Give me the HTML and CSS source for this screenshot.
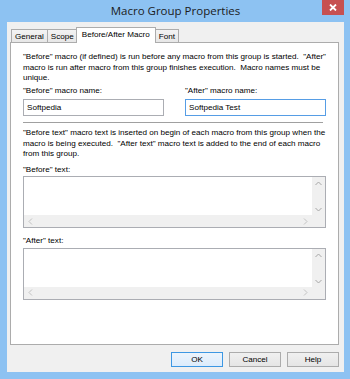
FILE: index.html
```html
<!DOCTYPE html>
<html lang="en">
<head>
    <meta charset="UTF-8">
    <meta name="viewport" content="width=device-width, initial-scale=1.0">
    <title>Macro Group Properties</title>
    <link rel="stylesheet" href="styles.css">
</head>
<body>

    <div class="window">
        <!-- Thanh tiêu đề -->
        <div class="titlebar">
            <div class="title">Macro Group Properties</div>
            <div class="close">
                <svg width="8" height="7" viewBox="0 0 8 7"><path d="M1 0.5 L7 6.5 M7 0.5 L1 6.5" stroke="#fff" stroke-width="1.8"/></svg>
            </div>
        </div>

        <div class="client">
            <div class="tabs">
                <div class="tab">General</div>
                <div class="tab">Scope</div>
                <div class="tab active">Before/After Macro</div>
                <div class="tab">Font</div>
            </div>

            <div class="panel">
                <p class="info">"Before" macro (if defined) is run before any macro from this group is started.&nbsp; "After" macro is run after macro from this group finishes execution.&nbsp; Macro names must be unique.</p>

                <div class="fields">
                    <div class="field">
                        <div class="label">"Before" macro name:</div>
                        <div class="input">Softpedia</div>
                    </div>
                    <div class="field">
                        <div class="label">"After" macro name:</div>
                        <div class="input focused">Softpedia Test</div>
                    </div>
                </div>

                <div class="separator"></div>

                <p class="info second">"Before text" macro text is inserted on begin of each macro from this group when the macro is being executed.&nbsp; "After text" macro text is added to the end of each macro from this group.</p>

                <div class="label before-label">"Before" text:</div>
                <div class="memo">
                    <div class="memo-text"></div>
                    <div class="vscroll">
                        <svg width="7" height="5" viewBox="0 0 7 5"><path d="M0.5 4 L3.5 1 L6.5 4" fill="none" stroke="#a6a6a6"/></svg>
                        <svg width="7" height="5" viewBox="0 0 7 5"><path d="M0.5 1 L3.5 4 L6.5 1" fill="none" stroke="#a6a6a6"/></svg>
                    </div>
                    <div class="hscroll">
                        <svg width="5" height="7" viewBox="0 0 5 7"><path d="M4 0.5 L1 3.5 L4 6.5" fill="none" stroke="#c2c2c2"/></svg>
                        <svg width="5" height="7" viewBox="0 0 5 7"><path d="M1 0.5 L4 3.5 L1 6.5" fill="none" stroke="#c2c2c2"/></svg>
                    </div>
                    <div class="corner"></div>
                </div>

                <div class="label after-label">"After" text:</div>
                <div class="memo">
                    <div class="memo-text"></div>
                    <div class="vscroll">
                        <svg width="7" height="5" viewBox="0 0 7 5"><path d="M0.5 4 L3.5 1 L6.5 4" fill="none" stroke="#a6a6a6"/></svg>
                        <svg width="7" height="5" viewBox="0 0 7 5"><path d="M0.5 1 L3.5 4 L6.5 1" fill="none" stroke="#a6a6a6"/></svg>
                    </div>
                    <div class="hscroll">
                        <svg width="5" height="7" viewBox="0 0 5 7"><path d="M4 0.5 L1 3.5 L4 6.5" fill="none" stroke="#c2c2c2"/></svg>
                        <svg width="5" height="7" viewBox="0 0 5 7"><path d="M1 0.5 L4 3.5 L1 6.5" fill="none" stroke="#c2c2c2"/></svg>
                    </div>
                    <div class="corner"></div>
                </div>
            </div>

            <div class="buttons">
                <button class="default">OK</button>
                <button>Cancel</button>
                <button>Help</button>
            </div>
        </div>
    </div>

</body>
</html>
```

FILE: styles.css
```css
* {
    box-sizing: border-box;
}

body {
    margin: 0;
    font-family: 'Liberation Sans', Arial, sans-serif;
    font-size: 8.1px;
    color: #000;
}

.window {
    width: 350px;
    height: 379px;
    background-color: #8dc2f2;
    padding: 0 6px 7px 7px;
    display: flex;
    flex-direction: column;
}

.titlebar {
    height: 22px;
    display: flex;
    align-items: flex-start;
    padding-left: 22px;
}

.title {
    flex: 1;
    text-align: center;
    font-family: 'Open Sans', sans-serif;
    font-size: 11.5px;
    line-height: 22px;
    color: #1b1b1b;
}

.close {
    width: 22px;
    height: 15px;
    background-color: #c75050;
    display: flex;
    align-items: center;
    justify-content: center;
}

.client {
    flex: 1;
    background-color: #f0f0f0;
    padding: 5px 5px 0 3px;
    display: flex;
    flex-direction: column;
}

.tabs {
    display: flex;
    align-items: flex-end;
    height: 16px;
    padding-left: 1px;
    margin-bottom: -1px;
}

.tab {
    height: 14px;
    line-height: 13px;
    padding: 0 3px;
    border: 1px solid #acacac;
    border-bottom: none;
    margin-right: -1px;
    background: linear-gradient(#f3f3f3, #e6e6e6);
}

.tab.active {
    height: 16px;
    line-height: 14px;
    background: #fff;
    position: relative;
    z-index: 1;
    padding: 0 5px;
    margin: 0 -1px 0 -1px;
}

.panel {
    width: 329px;
    height: 303px;
    background-color: #fff;
    border: 1px solid #acacac;
    padding: 9px 12px 0 12px;
}

.info {
    margin: 0;
    line-height: 10.5px;
}

.fields {
    display: flex;
    gap: 21px;
    margin-top: 2px;
}

.field {
    width: 141px;
}

.label {
    line-height: 10.5px;
}

.input {
    height: 17px;
    margin-top: 3px;
    border: 1px solid #abadb3;
    padding-left: 3px;
    line-height: 15px;
}

.input.focused {
    border-color: #569de5;
}

.separator {
    width: 300px;
    height: 1px;
    background-color: #a0a0a0;
    margin-top: 6px;
}

.info.second {
    margin-top: 5px;
}

.before-label {
    margin-top: 5px;
}

.after-label {
    margin-top: 8px;
}

.memo {
    width: 303px;
    height: 52px;
    margin-top: 1px;
    border: 1px solid #abadb3;
    display: grid;
    grid-template-columns: 1fr 13px;
    grid-template-rows: 1fr 12px;
}

.vscroll, .hscroll, .corner {
    background-color: #f0f0f0;
}

.vscroll {
    display: flex;
    flex-direction: column;
    align-items: center;
    justify-content: space-between;
    padding: 4px 0 3px;
}

.hscroll {
    display: flex;
    align-items: center;
    justify-content: space-between;
    padding: 0 4px;
}

.buttons {
    display: flex;
    justify-content: flex-end;
    gap: 6px;
    margin-top: 7px;
}

.buttons button {
    width: 52px;
    height: 15px;
    padding: 0;
    font-family: 'Liberation Sans', Arial, sans-serif;
    font-size: 8.1px;
    color: #000;
    border: 1px solid #acacac;
    background: linear-gradient(#f0f0f0, #e5e5e5);
}

.buttons button.default {
    border-color: #3c97e3;
    background: linear-gradient(#ecf4fc, #dcecfc);
}
```
